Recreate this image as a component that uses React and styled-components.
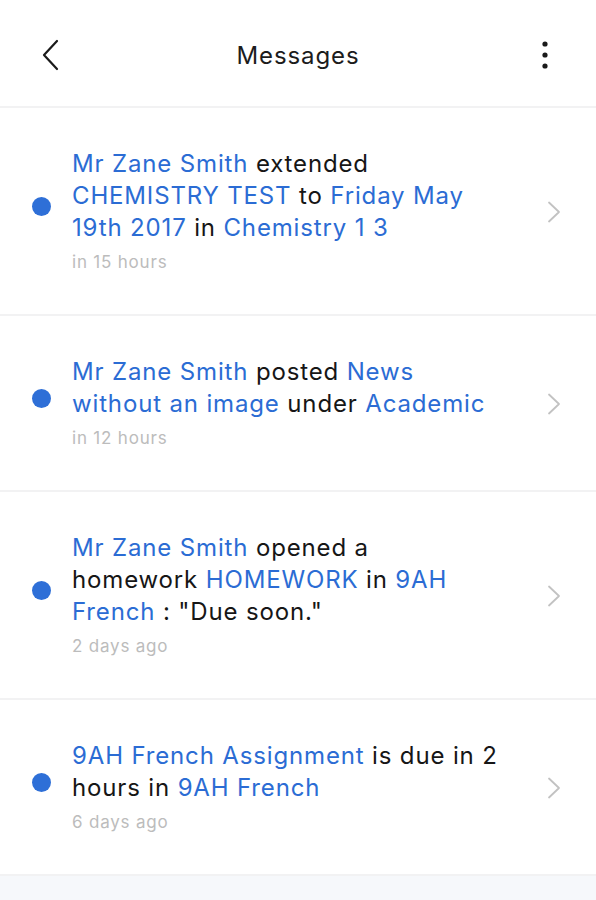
import React from 'react';
import styled, { createGlobalStyle } from 'styled-components';

const GlobalStyle = createGlobalStyle`
    html, body {
        margin: 0;
        padding: 0;
        background-color: #f6f8fb;
        font-family: 'Inter', 'Noto Sans', sans-serif;
    }
`

const Screen = styled.div`
    display: flex;
    flex-direction: column;
    width: 596px;
`

const Header = styled.header`
    display: flex;
    align-items: center;
    justify-content: space-between;
    height: 102px;
    padding: 4px 36px 0 36px;
    background-color: #fff;
    border-bottom: 2px solid #f2f2f3;
    box-sizing: content-box;
`

const IconButton = styled.button`
    display: flex;
    align-items: center;
    justify-content: center;
    width: 30px;
    height: 40px;
    padding: 0;
    border: none;
    background: none;
    cursor: pointer;
`

const Title = styled.h1`
    margin: 0;
    font-size: 24px;
    font-weight: 400;
    color: #1c1c1c;
    letter-spacing: 0.9px;
`

const List = styled.ul`
    list-style: none;
    margin: 0;
    padding: 0;
    background-color: #fff;
`

const Row = styled.li`
    display: flex;
    align-items: center;
    padding: 40px 0 39px 32px;
    border-bottom: 2px solid #f2f2f3;
`

const Dot = styled.span`
    flex: none;
    width: 19px;
    height: 19px;
    border-radius: 50%;
    background-color: #2e6fd7;
    margin: 0 21px ${p => p.$lift}px 0;
`

const Body = styled.div`
    width: 428px;
`

const Text = styled.p`
    margin: 0;
    font-size: 24px;
    line-height: 32px;
    letter-spacing: 0.85px;
    color: #161616;
`

const Link = styled.span`
    color: #2b6cd4;
`

const Time = styled.div`
    margin-top: 5px;
    font-size: 17px;
    line-height: 26px;
    letter-spacing: 0.8px;
    color: #bcbcbc;
`

const Chevron = styled.svg`
    flex: none;
    margin-left: 47px;
`

const messages = [
    {
        parts: [['Mr Zane Smith', true], [' extended ', false], ['CHEMISTRY TEST', true], [' to ', false], ['Friday May 19th 2017', true], [' in ', false], ['Chemistry 1 3', true]],
        time: 'in 15 hours',
    },
    {
        parts: [['Mr Zane Smith', true], [' posted ', false], ['News without an image', true], [' under ', false], ['Academic', true]],
        time: 'in 12 hours',
    },
    {
        parts: [['Mr Zane Smith', true], [' opened a homework ', false], ['HOMEWORK', true], [' in ', false], ['9AH French', true], [' : "Due soon."', false]],
        time: '2 days ago',
    },
    {
        parts: [['9AH French Assignment', true], [' is due in 2 hours in ', false], ['9AH French', true]],
        time: '6 days ago',
    },
];

function Message({ parts, time }) {
    return (
        <Row>
            <Dot $lift={10} />
            <Body>
                <Text>
                    {parts.map(([t, isLink], i) => isLink ? <Link key={i}>{t}</Link> : <React.Fragment key={i}>{t}</React.Fragment>)}
                </Text>
                <Time>{time}</Time>
            </Body>
            <Chevron width="14" height="22" viewBox="0 0 14 22">
                <path d="M2 1.5 L12 11 L2 20.5" fill="none" stroke="#c2c2c2" strokeWidth="1.8" strokeLinecap="round" strokeLinejoin="round" />
            </Chevron>
        </Row>
    );
}

export default function App() {
    return (
        <Screen>
            <GlobalStyle />
            <Header>
                <IconButton aria-label="Back">
                    <svg width="20" height="32" viewBox="0 0 20 32">
                        <path d="M16 2 L3 16 L16 30" fill="none" stroke="#1a1a1a" strokeWidth="2.2" strokeLinecap="round" strokeLinejoin="round" />
                    </svg>
                </IconButton>
                <Title>Messages</Title>
                <IconButton aria-label="More">
                    <svg width="8" height="30" viewBox="0 0 8 30">
                        <circle cx="4" cy="4" r="2.6" fill="#1a1a1a" />
                        <circle cx="4" cy="15" r="2.6" fill="#1a1a1a" />
                        <circle cx="4" cy="26" r="2.6" fill="#1a1a1a" />
                    </svg>
                </IconButton>
            </Header>
            <List>
                {messages.map((m, i) => <Message key={i} {...m} />)}
            </List>
        </Screen>
    );
}
